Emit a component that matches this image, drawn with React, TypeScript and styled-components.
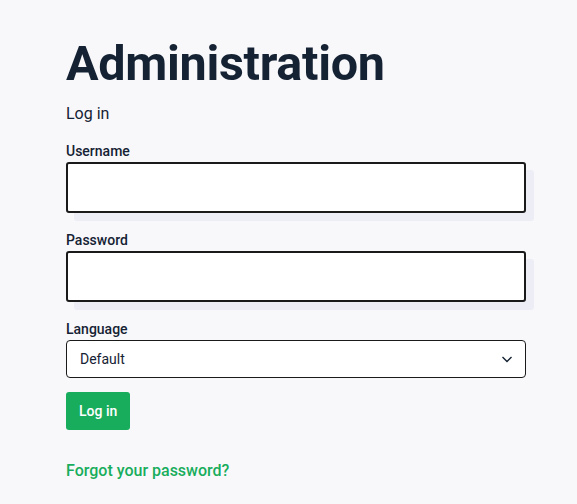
import React from "react";
import styled, { createGlobalStyle } from "styled-components";

const GlobalStyle = createGlobalStyle`
  body {
    margin: 0;
    background: #f8f8fb;
    font-family: Roboto, "Noto Sans", sans-serif;
    color: #152233;
  }
`;

export default function App() {
  return (
    <>
      <GlobalStyle />
      <Container>
        <Title>Administration</Title>
        <Subtitle>Log in</Subtitle>
        <Form onSubmit={(e) => e.preventDefault()}>
          <Field>
            <Label htmlFor="username">Username</Label>
            <TextInput id="username" type="text" />
          </Field>
          <Field>
            <Label htmlFor="password">Password</Label>
            <TextInput id="password" type="password" />
          </Field>
          <Field $last>
            <Label htmlFor="language">Language</Label>
            <SelectWrapper>
              <Select id="language" defaultValue="default">
                <option value="default">Default</option>
              </Select>
              <Chevron viewBox="0 0 16 16">
                <path d="M3.5 6l4.5 4.5L12.5 6" />
              </Chevron>
            </SelectWrapper>
          </Field>
          <Button type="submit">Log in</Button>
        </Form>
        <ForgotLink href="#">Forgot your password?</ForgotLink>
      </Container>
    </>
  );
}

const Container = styled.div`
  width: 460px;
  padding: 29px 0 0 66px;
`;

const Title = styled.h1`
  margin: 0;
  font-size: 48.5px;
  line-height: 70px;
  font-weight: 700;
  letter-spacing: -0.3px;
  color: #152233;
`;

const Subtitle = styled.div`
  font-size: 16px;
  line-height: 24px;
  margin-top: 3px;
`;

const Form = styled.form`
  display: flex;
  flex-direction: column;
  margin-top: 15px;
`;

const Field = styled.div<{ $last?: boolean }>`
  display: flex;
  flex-direction: column;
  margin-bottom: ${(p) => (p.$last ? "14px" : "17px")};
`;

const Label = styled.label`
  font-size: 14px;
  font-weight: 500;
  line-height: 20px;
  margin-bottom: 1px;
`;

const TextInput = styled.input`
  box-sizing: border-box;
  width: 460px;
  height: 51px;
  border: 2px solid #1a1a1a;
  border-radius: 3px;
  background: #fff;
  box-shadow: 8px 8px 0 #ededf6;
  font: inherit;
  padding: 0 12px;
  outline: none;
`;

const SelectWrapper = styled.div`
  position: relative;
  width: 460px;
`;

const Select = styled.select`
  box-sizing: border-box;
  width: 100%;
  height: 38px;
  appearance: none;
  border: 1px solid #1a1a1a;
  border-radius: 4px;
  background: #fff;
  font-family: inherit;
  font-size: 14px;
  color: #152233;
  padding: 0 13px;
  outline: none;
`;

const Chevron = styled.svg`
  position: absolute;
  right: 11px;
  top: 11px;
  width: 16px;
  height: 16px;
  fill: none;
  stroke: #152233;
  stroke-width: 1.4;
  pointer-events: none;
`;

const Button = styled.button`
  align-self: flex-start;
  height: 38px;
  padding: 0 13px;
  border: none;
  border-radius: 3px;
  background: #18ad5c;
  color: #fff;
  font-family: inherit;
  font-size: 14px;
  font-weight: 500;
  cursor: pointer;
`;

const ForgotLink = styled.a`
  display: inline-block;
  margin-top: 29px;
  font-size: 16px;
  font-weight: 500;
  line-height: 24px;
  color: #18ad5c;
  text-decoration: none;
`;
